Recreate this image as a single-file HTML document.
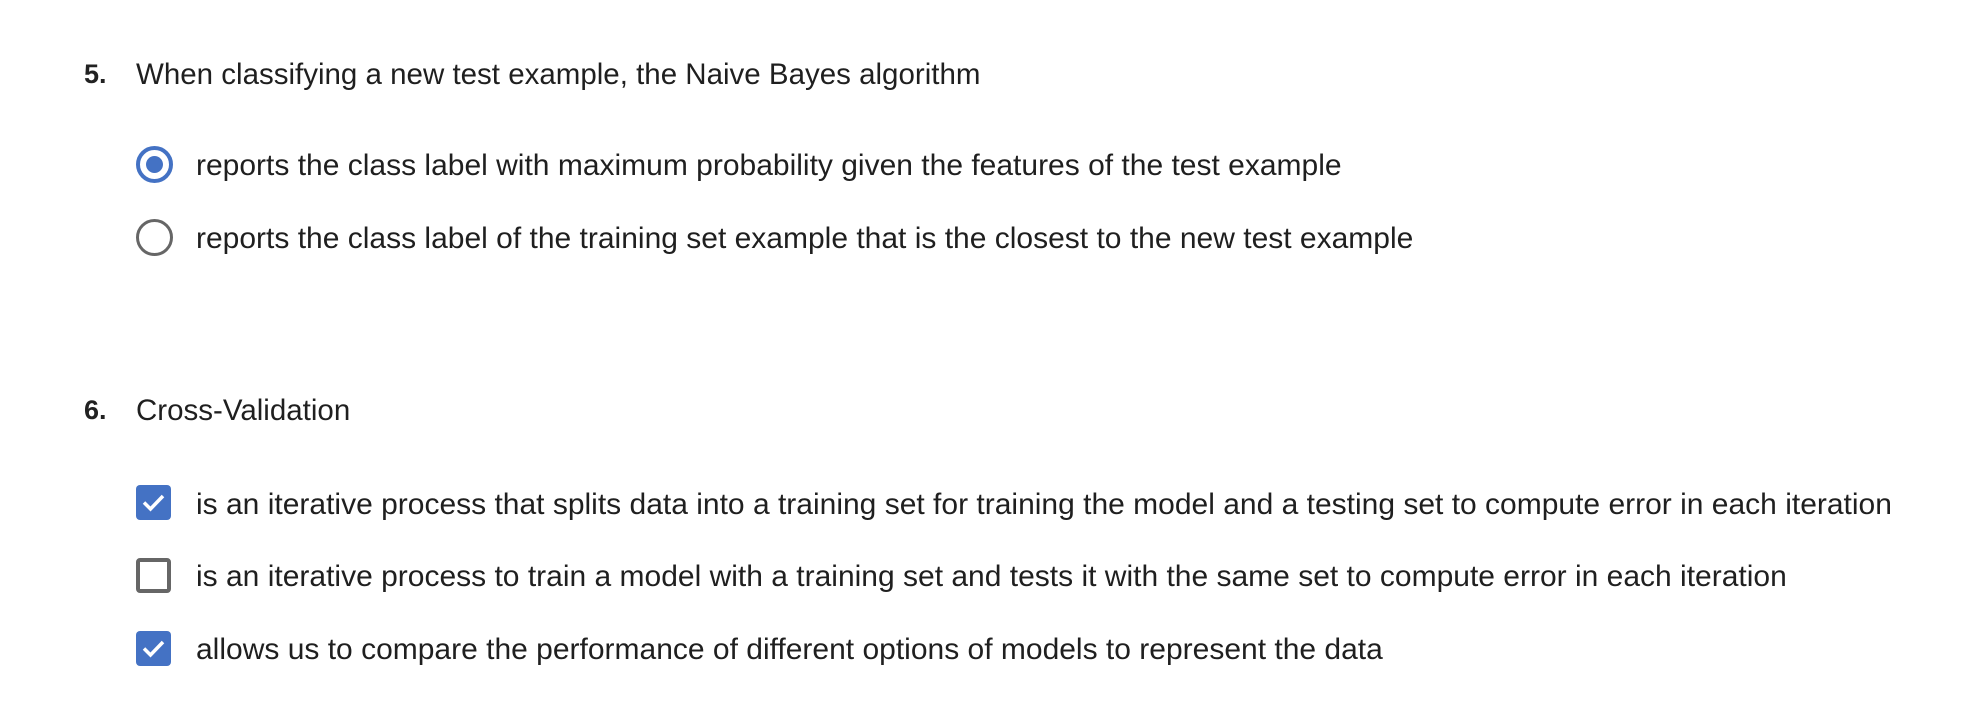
<!DOCTYPE html>
<html><head><meta charset="utf-8"><style>
html,body{margin:0;padding:0;background:#fff;width:1980px;height:704px;overflow:hidden}
body{font-family:"Liberation Sans",sans-serif;color:#1f1f1f;position:relative}
.t{position:absolute;white-space:nowrap;font-size:30px;line-height:34px}
.q{font-size:29.5px}
.n{position:absolute;font-weight:bold;font-size:27px;line-height:30px;color:#222}
.radio{position:absolute;width:37px;height:37px;border-radius:50%;box-sizing:border-box}
.cb{position:absolute;width:35px;height:35px;border-radius:4px;box-sizing:border-box}
</style></head><body>
<div class="n" style="left:84px;top:59px">5.</div>
<div class="t q" style="left:136px;top:58px">When classifying a new test example, the Naive Bayes algorithm</div>

<div class="radio" style="left:136px;top:146px;border:4px solid #4472c4"><div style="position:absolute;left:6px;top:6px;width:17px;height:17px;border-radius:50%;background:#4472c4"></div></div>
<div class="t" style="left:196px;top:149px">reports the class label with maximum probability given the features of the test example</div>

<div class="radio" style="left:136px;top:219px;border:3.5px solid #666"></div>
<div class="t" style="left:196px;top:222px">reports the class label of the training set example that is the closest to the new test example</div>

<div class="n" style="left:84px;top:395px">6.</div>
<div class="t q" style="left:136px;top:394px">Cross-Validation</div>

<div class="cb" style="left:136px;top:485px;background:#4472c4"><svg width="35" height="35" viewBox="0 0 35 35"><path d="M8 17.5 L14.5 24 L27 11" fill="none" stroke="#fff" stroke-width="3.5"/></svg></div>
<div class="t" style="left:196px;top:488px">is an iterative process that splits data into a training set for training the model and a testing set to compute error in each iteration</div>

<div class="cb" style="left:136px;top:558px;border:4px solid #666"></div>
<div class="t" style="left:196px;top:560px">is an iterative process to train a model with a training set and tests it with the same set to compute error in each iteration</div>

<div class="cb" style="left:136px;top:631px;background:#4472c4"><svg width="35" height="35" viewBox="0 0 35 35"><path d="M8 17.5 L14.5 24 L27 11" fill="none" stroke="#fff" stroke-width="3.5"/></svg></div>
<div class="t" style="left:196px;top:633px">allows us to compare the performance of different options of models to represent the data</div>
</body></html>
